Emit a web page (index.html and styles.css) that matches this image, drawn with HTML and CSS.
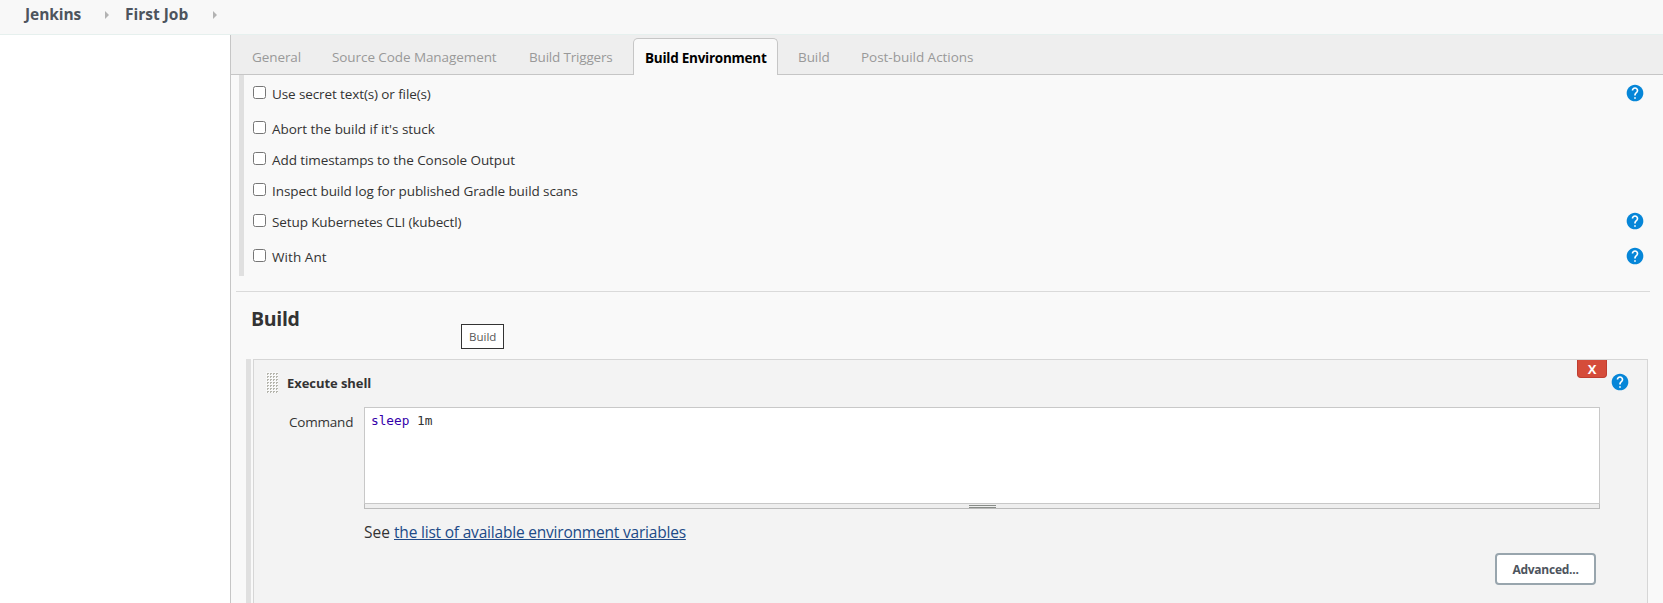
FILE: index.html
```html
<!DOCTYPE html>
<html lang="en">
<head>
<meta charset="utf-8">
<title>First Job Config [Jenkins]</title>
<link rel="stylesheet" href="styles.css">
</head>
<body>
<svg width="0" height="0" class="defs" aria-hidden="true">
  <symbol id="help" viewBox="0 0 24 24"><path fill="#0686d8" d="M12 2C6.48 2 2 6.48 2 12s4.48 10 10 10 10-4.480 10-10S17.52 2 12 2z"/><path fill="#fff" d="M13 19h-2v-2h2v2zm2.070-7.750l-.9.920C13.450 12.900 13 13.500 13 15h-2v-.5c0-1.100.450-2.100 1.170-2.830l1.240-1.260c.370-.360.590-.860.590-1.410 0-1.100-.900-2-2-2s-2 .900-2 2H8c0-2.210 1.790-4 4-4s4 1.790 4 4c0 .880-.360 1.680-.930 2.250z"/></symbol>
</svg>
<header class="crumbs">
  <a class="crumb crumb-home">Jenkins</a><i class="arrow"></i><a class="crumb crumb-job">First Job</a><i class="arrow"></i>
</header>
<div class="page">
  <aside class="side"></aside>
  <main class="main">
    <nav class="tabs">
      <a class="tab general"><span>General</span></a>
      <a class="tab scm"><span>Source Code Management</span></a>
      <a class="tab triggers"><span>Build Triggers</span></a>
      <a class="tab environment active"><span>Build Environment</span></a>
      <a class="tab build"><span>Build</span></a>
      <a class="tab post"><span>Post-build Actions</span></a>
    </nav>
    <section class="options">
      <div class="row tall"><input type="checkbox"><label class="o1">Use secret text(s) or file(s)</label><svg class="help"><use href="#help"/></svg></div>
      <div class="row"><input type="checkbox"><label class="o2">Abort the build if it's stuck</label></div>
      <div class="row"><input type="checkbox"><label class="o3">Add timestamps to the Console Output</label></div>
      <div class="row"><input type="checkbox"><label class="o4">Inspect build log for published Gradle build scans</label></div>
      <div class="row tall"><input type="checkbox"><label class="o5">Setup Kubernetes CLI (kubectl)</label><svg class="help"><use href="#help"/></svg></div>
      <div class="row tall"><input type="checkbox"><label class="o6">With Ant</label><svg class="help"><use href="#help"/></svg></div>
    </section>
    <h2 class="heading"><span>Build</span></h2>
    <section class="steps">
      <div class="step">
        <div class="step-head">
          <svg class="grip" width="12" height="21"><defs><pattern id="dots" width="3" height="3" patternUnits="userSpaceOnUse"><path fill="#f9f9f9" d="M0 0h3v3H0z"/><path fill="#b5b5ad" d="M1 1h2v1H2v1H1z"/></pattern></defs><path fill="url(#dots)" d="M0 0h12v21H0z"/></svg>
          <b class="step-title">Execute shell</b>
          <button class="delete">X</button>
          <svg class="help step-help"><use href="#help"/></svg>
        </div>
        <div class="command">
          <label class="command-label"><span>Command</span></label>
          <div class="field">
            <div class="editor"><code><span class="builtin">sleep</span> 1m</code></div>
            <div class="resizer"><i></i></div>
            <p class="note"><span class="see">See</span><a>the list of available environment variables</a></p>
          </div>
        </div>
        <div class="actions"><button class="advanced">Advanced...</button></div>
      </div>
    </section>
  </main>
</div>
<div class="tooltip">Build</div>
</body>
</html>
```
FILE: styles.css
```css
* { box-sizing: border-box; }
body { margin: 0; height: 603px; overflow: hidden; display: flex; flex-direction: column; background: #fff; color: #333; font: 13.5px/20px "Open Sans", "Noto Sans", sans-serif; }
.defs { position: absolute; }
span, label, .crumb, .step-title, .note a, .tooltip { white-space: nowrap; }
.crumbs { flex: none; height: 35px; display: flex; padding: 4px 0 0 25px; background: #f8f8f8; border-bottom: 1px solid #e6f0ee; }
.crumb { font-size: 15.5px; font-weight: 700; color: #4d545d; }
.crumb-home { width: 80px; letter-spacing: -.07px; }
.crumb-job { width: 88px; letter-spacing: 0; }
.arrow { width: 0; height: 8px; margin: 7px 16px 0 0; border: solid transparent; border-width: 4px 0 4px 4px; border-left-color: #b3b3b3; }
.page { flex: 1; display: flex; }
.side { width: 230px; }
.main { flex: 1; display: flex; flex-direction: column; background: #f9f9f9; border-left: 1px solid #c6c6c6; }
.tabs { height: 40px; display: flex; align-items: flex-end; padding-left: 10px; background: #eee; border-bottom: 1px solid #c6c6c6; }
.tab { height: 37px; padding: 9px 0 0 10px; border: 1px solid transparent; border-bottom: 0; color: #999; letter-spacing: -.08px; }
.general { width: 80px; }
.scm { width: 197px; }
.triggers { width: 115px; letter-spacing: -.18px; }
.environment { width: 145px; letter-spacing: -.25px; }
.build { width: 63px; margin-left: 9px; }
.post { letter-spacing: -.03px; }
.tab.active { color: #000; font-weight: 700; background: #f9f9f9; border-color: #c6c6c6; border-radius: 5px 5px 0 0; margin-bottom: -1px; height: 37px; padding-left: 11px; }
.options { margin-left: 8px; padding: 3px 19px 0 9px; height: 201px; border-left: 5px solid #e0e0e0; }
.row { display: flex; height: 31px; padding-top: 8px; }
.row.tall, .row:nth-child(1) { height: 35px; }
.row input { width: 13px; height: 13px; margin: 0 6px 0 0; }
.row label { margin-top: -2px; line-height: 20px; height: 20px; }
.o1, .o5 { letter-spacing: -.11px; }
.o2 { letter-spacing: -.03px; }
.o3, .o4 { letter-spacing: -.08px; }
.o6 { letter-spacing: .08px; }
.help { width: 20px; height: 20px; margin: -3px -1px 0 auto; }
.heading { margin: 15px 13px 0 5px; height: 68px; padding: 14px 0 0 15px; border-top: 1px solid #dadada; font-size: 19.5px; line-height: 26px; letter-spacing: -.3px; }
.steps { flex: 1; display: flex; margin: 0 15px 0 15px; padding-left: 2px; border-left: 5px solid #e0e0e0; }
.step { flex: 1; border: 1px solid #d6d6d6; border-bottom: 0; background: #f3f3f3; }
.step-head { display: flex; height: 47px; padding: 0 17px 0 12px; }
.grip { margin: 12px 9px 0 0; }
.step-title { margin-top: 13px; font-size: 13px; letter-spacing: -.06px; }
.delete { width: 30px; height: 18px; margin: 0 3px 0 auto; padding: 0; border: 1px solid #bf3d30; border-top: 0; border-radius: 0 0 4px 4px; background: #d54c3a; color: #fff; font: 700 13px/18px "Open Sans", sans-serif; }
.step-help { margin: 12px 0 0; }
.command { display: flex; padding: 0 47px 0 35px; }
.command-label { width: 75px; padding-top: 5px; letter-spacing: -.2px; }
.field { flex: 1; }
.editor { height: 97px; padding: 2px 6px; border: 1px solid #c8c8c8; background: #fff; }
.editor code { font: 12.75px/20px "DejaVu Sans Mono", monospace; }
.builtin { color: #30a; }
.resizer { height: 5px; padding-top: 1px; border: 1px solid #bbb; border-top: 0; background: #eee; display: flex; justify-content: center; }
.resizer i { width: 27px; height: 3px; border: solid #888c88; border-width: 1px 0; }
.note { margin: 12px 0 0; font-size: 15.5px; line-height: 22px; display: flex; }
.see { width: 30px; }
.note a { color: #204a87; text-decoration: underline; text-underline-offset: 1px; letter-spacing: -.2px; }
.actions { display: flex; justify-content: flex-end; padding: 10px 51px 0 0; }
.advanced { width: 101px; height: 32px; padding: 2px 0 0; border: 2px solid #98a5ad; border-radius: 4px; background: #fff; color: #4d545d; font: 700 12px/26px "Open Sans", sans-serif; letter-spacing: -.25px; }
.tooltip { position: absolute; left: 461px; top: 324px; width: 43px; height: 25px; padding-left: 7px; border: 1px solid #333; background: #fff; color: #575757; font-size: 11.5px; line-height: 23px; }
```
